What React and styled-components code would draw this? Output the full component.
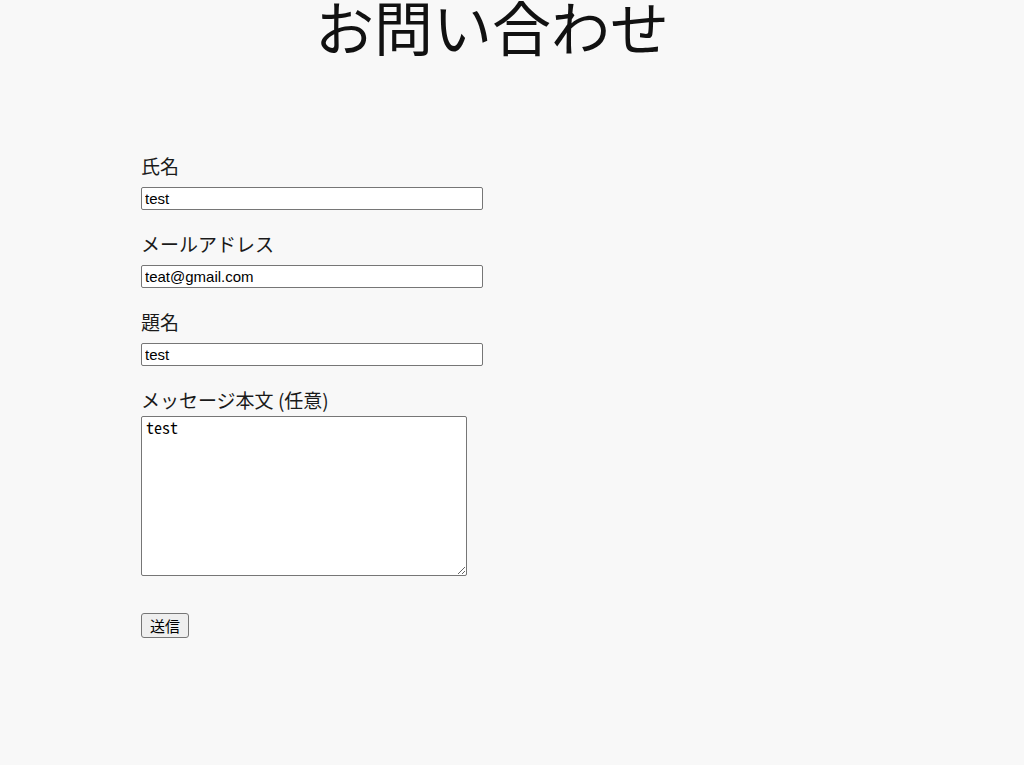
import React from "react";
import styled, { createGlobalStyle } from "styled-components";

const GlobalStyle = createGlobalStyle`
    html, body {
        margin: 0;
        padding: 0;
        background: #f8f8f8;
    }
    body {
        font-family: "Noto Sans CJK JP", "Noto Sans", sans-serif;
        color: #1a1a1a;
    }
`

const Page = styled('div')`
    width: 1024px;
    min-height: 765px;
`

const Title = styled('h1')`
    width: 984px;
    margin: 0;
    padding-top: 1px;
    text-align: center;
    font-size: 59px;
    font-weight: 400;
    line-height: 50px;
    color: #111;
`

const Form = styled('form')`
    display: flex;
    flex-direction: column;
    align-items: flex-start;
    padding: 101px 0 0 141px;
`

const Field = styled('div')`
    display: flex;
    flex-direction: column;
    align-items: flex-start;
    margin-bottom: ${(p) => p.$last ? '37px' : '20px'};
`

const Label = styled('label')`
    font-size: 19px;
    line-height: 28px;
    margin-bottom: ${(p) => p.$tight ? '2px' : '7px'};
`

const Input = styled('input')`
    box-sizing: border-box;
    width: 342px;
    height: 23px;
    padding: 1px 3px;
    border: 1px solid #767676;
    border-radius: 2px;
    background: #fff;
    font-family: "Liberation Sans", Arial, sans-serif;
    font-size: 15px;
    color: #000;
`

const TextArea = styled('textarea')`
    box-sizing: border-box;
    width: 326px;
    height: 160px;
    padding: 0 4px;
    border: 1px solid #767676;
    border-radius: 2px;
    background: #fff;
    font-family: "Noto Sans Mono CJK JP", "DejaVu Sans Mono", monospace;
    font-size: 16px;
    line-height: 20px;
    color: #000;
`

const Button = styled('button')`
    height: 25px;
    padding: 0 8px;
    border: 1px solid #767676;
    border-radius: 3px;
    background: #efefef;
    font-family: "Noto Sans CJK JP", sans-serif;
    font-size: 15px;
    line-height: 22px;
    color: #000;
`

const fields = [
    { id: 'name', label: '氏名', value: 'test' },
    { id: 'email', label: 'メールアドレス', value: 'teat@gmail.com' },
    { id: 'subject', label: '題名', value: 'test' },
]

const Contact = () => {
    return (
        <Page>
            <GlobalStyle />
            <Title>お問い合わせ</Title>
            <Form onSubmit={(e) => e.preventDefault()}>
                {fields.map((f) => (
                    <Field key={f.id}>
                        <Label htmlFor={f.id}>{f.label}</Label>
                        <Input id={f.id} type="text" defaultValue={f.value} />
                    </Field>
                ))}
                <Field $last>
                    <Label htmlFor="message" $tight>メッセージ本文 (任意)</Label>
                    <TextArea id="message" defaultValue="test" />
                </Field>
                <Button type="submit">送信</Button>
            </Form>
        </Page>
    )
}

export default Contact
